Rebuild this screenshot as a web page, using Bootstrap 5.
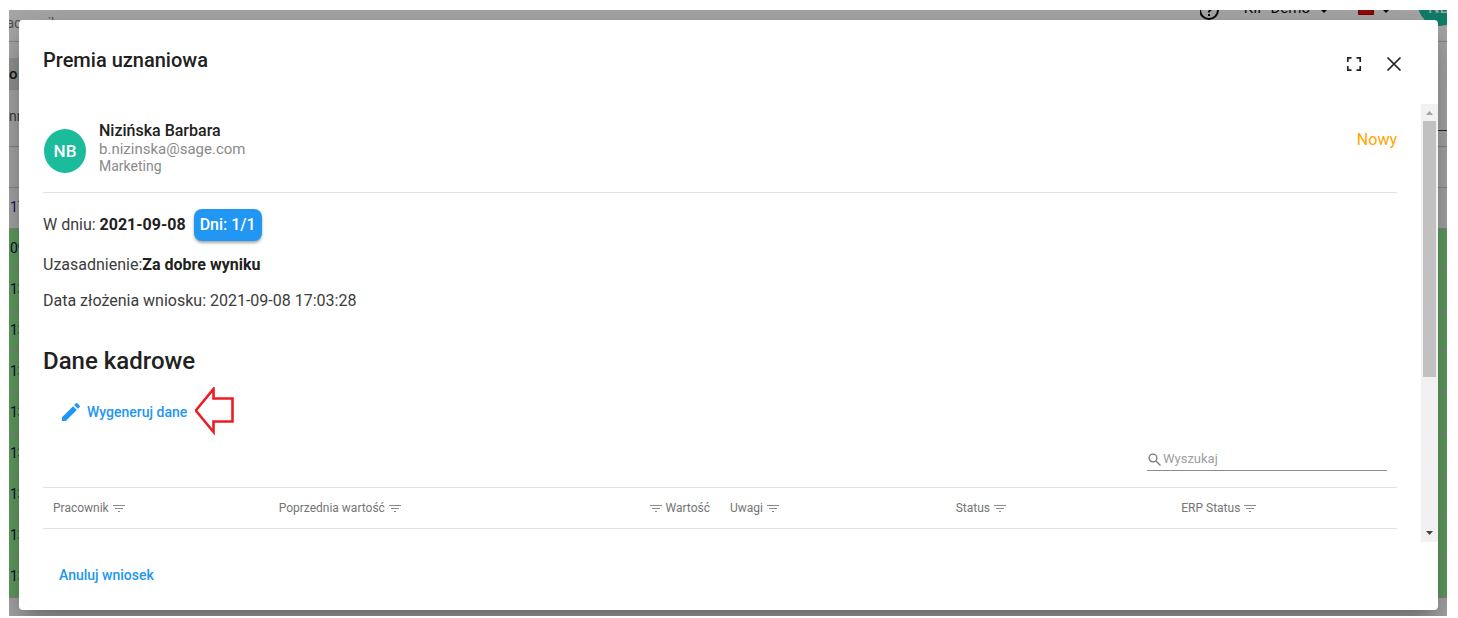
<!DOCTYPE html>
<html lang="pl">
<head>
<meta charset="utf-8">
<meta name="viewport" content="width=device-width, initial-scale=1">
<title>Premia uznaniowa</title>
<link href="https://cdn.jsdelivr.net/npm/bootstrap@5.3.0/dist/css/bootstrap.min.css" rel="stylesheet">
<style>
  body { font-family: Roboto, "Noto Sans", sans-serif; font-size: 16px; line-height: 24px; color: #212121; background: #fff; min-height: 100vh; padding: 10px 11px 2px 9px; }
  .under { inset: 0; background: #fafafa; font-size: 14px; line-height: 20px; }
  .under-top { height: 32px; border-bottom: 1px solid #ccc; }
  .under-top .crumb { color: #777; padding-top: 3px; margin-left: -7px; }
  .under-tools { margin-top: -12px; padding-right: 5px; font-size: 15px; color: #111; height: 30px; }
  .under-face { width: 44px; height: 44px; margin-right: -20px; margin-top: -16px; border-radius: 50%; background: #1abc9c; color: #fff; padding: 16px 0 0 10px; font-size: 16px; }
  .under-band { width: 60px; height: 32px; margin: 16px 0; background: #ddd; font-weight: 500; font-size: 15px; line-height: 32px; }
  .under-line { width: 60px; height: 25px; border-bottom: 1px solid #444; }
  .under-row { height: 41px; border-bottom: 1px solid #ccc; padding: 9px 1px; color: #228; }
  .under-row.filters { padding: 0; color: #555; }
  .under-row.ok { background: #90ee90; border-color: #d6b8d6; color: #115; }
  .dim { inset: 0; background: rgba(0,0,0,.32); }
  .sheet { margin: 10px 9px 6px 10px; border-radius: 4px; box-shadow: 0 11px 15px -7px rgba(0,0,0,.2), 0 24px 38px 3px rgba(0,0,0,.14), 0 9px 46px 8px rgba(0,0,0,.12); }
  .sheet-head { height: 84px; padding: 24px 32px 0 24px; }
  .sheet-head h1 { font-size: 20px; line-height: 32px; font-weight: 500; }
  .tool { width: 24px; height: 24px; }
  .scroll-body { padding: 17px 24px 0; }
  .person { padding-bottom: 18px; border-bottom: 1px solid #e0e0e0; }
  .face { width: 42px; height: 44px; margin: 8px 0 0 1px; border-radius: 50%; background: #1abc9c; font-weight: 500; font-size: 17px; line-height: 20px; }
  .who { margin-left: 13px; }
  .who strong { font-weight: 500; line-height: 20px; }
  .mail { font-size: 15px; line-height: 17px; color: #8a8a8a; }
  .dept { font-size: 14px; line-height: 16px; color: #8a8a8a; }
  .state { color: #ffa500; margin-top: 7px; }
  .fact { color: #3c3c3c; margin: 12px 0 0; }
  .fact b { font-weight: 700; color: #212121; }
  .chip { font-weight: 500; margin-left: 8px; padding: 4px 6px; border-radius: 8px; background: #2196f3; box-shadow: 0 2px 3px rgba(0,0,0,.35); }
  h2 { font-size: 24px; line-height: 32px; font-weight: 500; margin: 32px 0 10px; }
  .act { font-size: 14px; font-weight: 500; color: #2196f3; }
  .seek { width: 240px; height: 24px; margin: 10px 10px 0 0; padding-bottom: 1px; border-bottom: 1px solid #8c8c8c; font-size: 13px; }
  .seek input { font-size: 13px; line-height: 20px; outline: 0; min-width: 0; }
  .seek input::placeholder { color: #a0a0a0; opacity: 1; }
  .grid { table-layout: fixed; border-top: 1px solid #e0e0e0; border-bottom: 1px solid #e0e0e0; }
  .grid th { height: 41px; padding: 0 10px; font-size: 12px; line-height: 20px; font-weight: 400; color: #757575; white-space: nowrap; }
  .rail { width: 17px; background: #f1f1f1; }
  .rail i { height: 256px; margin: 0 2px; background: #c1c1c1; }
  .sheet-foot { height: 68px; padding: 0 40px 2px; }
</style>
</head>
<body class="d-flex flex-column">
<div class="position-relative overflow-hidden flex-grow-1 d-flex flex-column">

  <!-- request list behind the dialog -->
  <div class="under position-absolute overflow-hidden" aria-hidden="true">
    <div class="under-top d-flex justify-content-between">
      <span class="crumb">racownik</span>
      <div class="under-tools d-flex align-items-start">
        <svg class="mt-1" width="20" height="20" viewBox="0 0 20 20" fill="none" stroke="#111" stroke-width="2"><circle cx="9" cy="8" r="9"/><path d="M6.500 6a2.500 2.500 0 1 1 3.700 2.200Q9 9 9 10.500M9 12v2"/></svg>
        <span class="ms-4">KIP Demo</span>
        <svg class="ms-2 mt-1" width="16" height="16" viewBox="0 0 16 16"><path d="M1 6h10l-5 5z" fill="#111"/></svg>
        <svg class="ms-4 mt-1" width="16" height="16" viewBox="0 0 16 16"><path d="M0 0h16v6H0z" fill="#fff"/><path d="M.5 6h15v6.500H.5z" fill="#e01010" stroke="#a00"/></svg>
        <svg class="ms-1 mt-1" width="16" height="16" viewBox="0 0 16 16"><path d="M3 6h10l-5 5z" fill="#111"/></svg>
        <span class="under-face ms-4">NB</span>
      </div>
    </div>
    <div class="under-band">o</div>
    <div class="under-row filters d-flex justify-content-between"><span>nr</span><div class="under-line"></div></div>
    <div class="under-row"></div>
    <div class="under-row">17</div>
    <div class="under-row ok">09</div>
    <div class="under-row ok">13</div>
    <div class="under-row ok">13</div>
    <div class="under-row ok">13</div>
    <div class="under-row ok">13</div>
    <div class="under-row ok">13</div>
    <div class="under-row ok">13</div>
    <div class="under-row ok">13</div>
    <div class="under-row ok">13</div>
  </div>
  <div class="dim position-absolute"></div>

  <main class="sheet bg-white position-relative flex-grow-1 d-flex flex-column" role="dialog" aria-labelledby="dlgTitle">
    <header class="sheet-head d-flex">
      <h1 class="m-0 flex-grow-1" id="dlgTitle">Premia uznaniowa</h1>
      <div class="d-flex gap-3 mt-2">
        <button type="button" class="tool border-0 bg-transparent p-0 d-flex" aria-label="Pełny ekran"><svg width="24" height="24" viewBox="0 0 24 24" fill="none" stroke="#212121" stroke-width="1.700"><path d="M5.800 10V5.800H9.500M14.500 5.800h3.700V10M18.200 14v4.200h-3.700M9.500 18.200H5.800V14"/></svg></button>
        <button type="button" class="tool border-0 bg-transparent p-0 d-flex" aria-label="Zamknij"><svg width="24" height="24" viewBox="0 0 24 24" fill="none" stroke="#212121" stroke-width="1.700"><path d="M5.500 5.500l13 13M18.500 5.500l-13 13"/></svg></button>
      </div>
    </header>

    <div class="d-flex flex-grow-1">
      <div class="scroll-body flex-grow-1">
        <section class="person d-flex align-items-start">
          <span class="face text-white d-flex align-items-center justify-content-center flex-shrink-0">NB</span>
          <div class="who d-flex flex-column flex-grow-1">
            <strong>Nizińska Barbara</strong>
            <span class="mail">b.nizinska@sage.com</span>
            <span class="dept">Marketing</span>
          </div>
          <span class="state">Nowy</span>
        </section>

        <div class="fact d-flex align-items-center mt-3"><span>W dniu: <b>2021-09-08</b></span><span class="chip text-white">Dni: 1/1</span></div>
        <p class="fact">Uzasadnienie:<b>Za dobre wyniku</b></p>
        <p class="fact">Data złożenia wniosku: 2021-09-08 17:03:28</p>

        <h2>Dane kadrowe</h2>
        <div class="d-flex align-items-center">
          <button type="button" class="act border-0 bg-transparent d-flex align-items-center p-0 ms-3"><svg class="me-1" width="24" height="24" viewBox="0 0 24 24" fill="#2196f3"><path d="M3 17.250V21h3.750L17.810 9.940l-3.750-3.750L3 17.250zM20.710 7.040a1 1 0 0 0 0-1.410l-2.340-2.340a1 1 0 0 0-1.410 0l-1.830 1.830 3.750 3.750 1.830-1.830z"/></svg>Wygeneruj dane</button>
          <svg class="ms-2" width="40" height="50" viewBox="0 0 40 50" fill="none" stroke="#ed1c24" stroke-width="2.600"><path d="M.8 23.500L18.500 2v9.500h19v23h-19V45z"/></svg>
        </div>

        <div class="d-flex justify-content-end">
          <label class="seek d-flex align-items-end"><svg class="flex-shrink-0" width="16" height="20" viewBox="0 0 16 20" fill="none" stroke="#757575" stroke-width="1.300"><circle cx="6" cy="9" r="3.900"/><path d="M9 12l4.500 4.500"/></svg><input type="text" class="border-0 bg-transparent p-0 flex-grow-1" placeholder="Wyszukaj" aria-label="Wyszukaj"></label>
        </div>

        <table class="grid w-100 mt-3">
          <thead><tr>
            <th scope="col">Pracownik <svg width="14" height="12" viewBox="0 0 14 12" stroke="#8a8a8a"><path d="M1 2.500h12M3 5.500h8M6 8.500h2"/></svg></th>
            <th scope="col">Poprzednia wartość <svg width="14" height="12" viewBox="0 0 14 12" stroke="#8a8a8a"><path d="M1 2.500h12M3 5.500h8M6 8.500h2"/></svg></th>
            <th scope="col" class="text-end"><svg width="14" height="12" viewBox="0 0 14 12" stroke="#8a8a8a"><path d="M1 2.500h12M3 5.500h8M6 8.500h2"/></svg> Wartość</th>
            <th scope="col">Uwagi <svg width="14" height="12" viewBox="0 0 14 12" stroke="#8a8a8a"><path d="M1 2.500h12M3 5.500h8M6 8.500h2"/></svg></th>
            <th scope="col">Status <svg width="14" height="12" viewBox="0 0 14 12" stroke="#8a8a8a"><path d="M1 2.500h12M3 5.500h8M6 8.500h2"/></svg></th>
            <th scope="col">ERP Status <svg width="14" height="12" viewBox="0 0 14 12" stroke="#8a8a8a"><path d="M1 2.500h12M3 5.500h8M6 8.500h2"/></svg></th>
          </tr></thead>
        </table>
      </div>
      <div class="rail d-flex flex-column flex-shrink-0" aria-hidden="true">
        <svg width="17" height="17" viewBox="0 0 17 17"><path d="M5 11h7L8.500 7z" fill="#a3a3a3"/></svg>
        <i class="d-block"></i>
        <svg class="mt-auto" width="17" height="17" viewBox="0 0 17 17"><path d="M5 6h7l-3.500 4z" fill="#444"/></svg>
      </div>
    </div>

    <footer class="sheet-foot d-flex align-items-center">
      <button type="button" class="act border-0 bg-transparent p-0">Anuluj wniosek</button>
    </footer>
  </main>
</div>
<script src="https://cdn.jsdelivr.net/npm/bootstrap@5.3.0/dist/js/bootstrap.bundle.min.js"></script>
</body>
</html>
